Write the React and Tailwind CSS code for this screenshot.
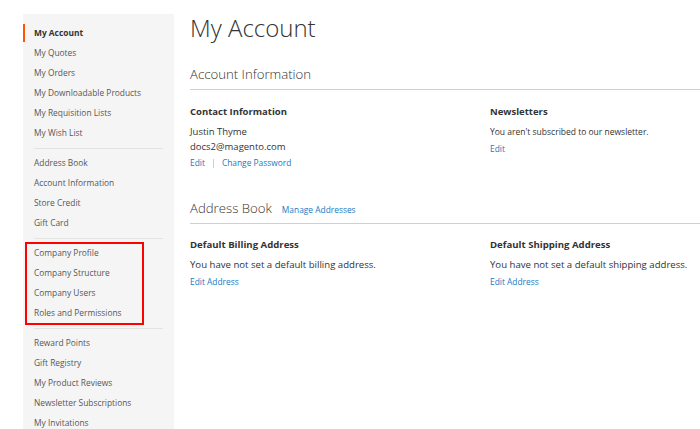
const groups = [
  ['My Account', 'My Quotes', 'My Orders', 'My Downloadable Products', 'My Requisition Lists', 'My Wish List'],
  ['Address Book', 'Account Information', 'Store Credit', 'Gift Card'],
  ['Company Profile', 'Company Structure', 'Company Users', 'Roles and Permissions'],
  ['Reward Points', 'Gift Registry', 'My Product Reviews', 'Newsletter Subscriptions', 'My Invitations'],
];

const NavItem = ({ label }) => {
  const active = label === 'My Account';
  return (
    <div className="relative h-5 flex items-center pl-[11px]">
      {active && <span className="absolute left-0 top-[1px] h-[18px] w-[2px] bg-[#ff5501]" />}
      <span className={active ? 'font-bold text-[#333]' : 'text-[#575757]'}>{label}</span>
    </div>
  );
};

const Sidebar = () => (
  <aside className="w-[151px] shrink-0 bg-[#f5f5f5] mt-[14px] pt-[9px] text-[8.4px]">
    {groups.map((items, i) => (
      <div key={i}>
        {i > 0 && <div className="ml-[11px] mr-[11px] h-px bg-[#e3e3e3] mt-[5px] mb-[4px]" />}
        <div className="relative">
          {i === 2 && (
            <span className="absolute left-[2px] -top-px w-[119px] h-[83px] border-2 border-[#ff0000]" />
          )}
          {items.map((label) => (
            <NavItem key={label} label={label} />
          ))}
        </div>
      </div>
    ))}
  </aside>
);

const Link = ({ children, className = '' }) => (
  <a className={`text-[#1979c3] text-[8.4px] ${className}`}>{children}</a>
);

export default function App() {
  return (
    <div className="w-[700px] h-[429px] overflow-hidden bg-white flex pl-[23px] text-[#333]" style={{ fontFamily: '"Open Sans", sans-serif' }}>
      <Sidebar />
      <main className="flex-1 pl-[16px]">
        <h1 className="text-[24px] font-light leading-none mt-[16px] text-[#333]">My Account</h1>

        <div className="mt-[25px] border-b border-[#d1d1d1] pb-[6px]">
          <h2 className="text-[13.2px] font-light leading-[18px]">Account Information</h2>
        </div>
        <div className="grid grid-cols-[300px_1fr] mt-[15px]">
          <div>
            <h3 className="text-[9.5px] font-bold leading-[14px]">Contact Information</h3>
            <p className="text-[9.5px] leading-[15px] mt-[5px]">Justin Thyme<br />docs2@magento.com</p>
            <div className="flex items-center mt-[2px] leading-[14px]">
              <Link>Edit</Link>
              <span className="mx-[8px] h-[9px] w-px bg-[#d1d1d1]" />
              <Link>Change Password</Link>
            </div>
          </div>
          <div>
            <h3 className="text-[9.5px] font-bold leading-[14px]">Newsletters</h3>
            <p className="text-[8.5px] leading-[14px] mt-[6px]">You aren&apos;t subscribed to our newsletter.</p>
            <div className="leading-[14px]"><Link>Edit</Link></div>
          </div>
        </div>

        <div className="mt-[29px] border-b border-[#d1d1d1] pb-[6px] flex items-baseline gap-[10px]">
          <h2 className="text-[13.2px] font-light leading-[18px]">Address Book</h2>
          <Link>Manage Addresses</Link>
        </div>
        <div className="grid grid-cols-[300px_1fr] mt-[14px]">
          <div>
            <h3 className="text-[9.6px] font-bold leading-[14px]">Default Billing Address</h3>
            <p className="text-[9.6px] leading-[15px] mt-[5px]">You have not set a default billing address.</p>
            <div className="leading-[14px]"><Link>Edit Address</Link></div>
          </div>
          <div>
            <h3 className="text-[9.6px] font-bold leading-[14px]">Default Shipping Address</h3>
            <p className="text-[9.6px] leading-[15px] mt-[5px]">You have not set a default shipping address.</p>
            <div className="leading-[14px]"><Link>Edit Address</Link></div>
          </div>
        </div>
      </main>
    </div>
  );
}
